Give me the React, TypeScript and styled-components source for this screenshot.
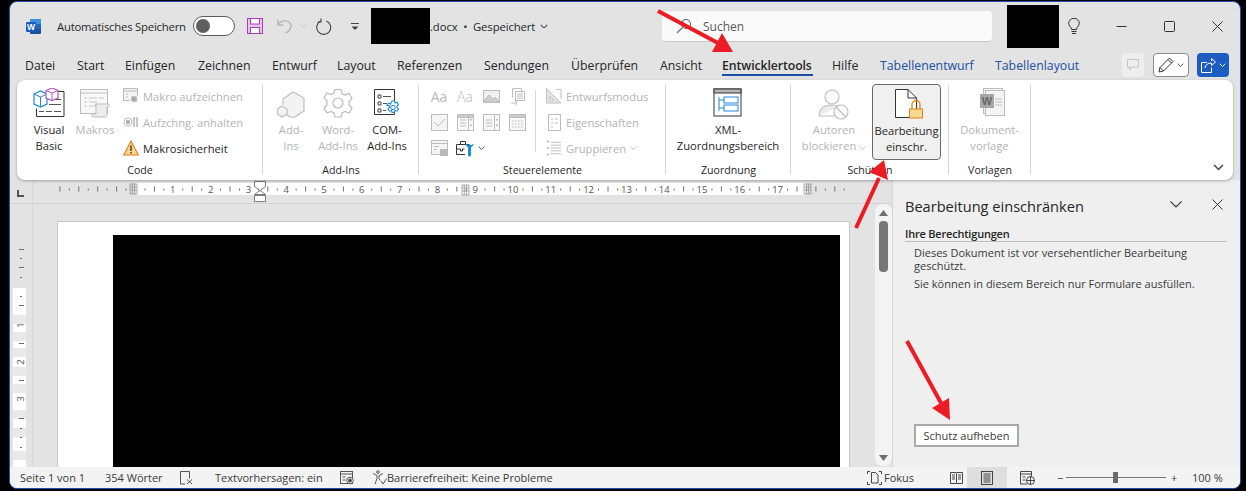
import React from 'react';
import styled, { createGlobalStyle } from 'styled-components';

const GlobalStyle = createGlobalStyle`
  html, body { margin: 0; padding: 0; background: #000; }
  * { box-sizing: border-box; }
`;

const FONT = `"Open Sans", "Noto Sans", sans-serif`;
const RED = '#ec1c24';

const Page = styled.div`
  position: relative;
  width: 1246px;
  height: 491px;
  padding: 1px 5px 2px 9px;
  background: #000;
  font-family: ${FONT};
  overflow: hidden;
`;

const Window = styled.div`
  height: 100%;
  display: flex;
  flex-direction: column;
  background: #e3e3e3;
  border: 1px solid #1c55ae;
  border-radius: 8px;
  overflow: hidden;
  color: #262626;
`;

const TitleBar = styled.div`
  height: 48px;
  flex: none;
  display: flex;
  align-items: center;
`;

const TitleSlot = styled.div<{ $w: number; $pad?: number }>`
  width: ${p => p.$w}px;
  flex: none;
  padding-left: ${p => p.$pad ?? 0}px;
  display: flex;
  align-items: center;
  font-size: 11.3px;
  letter-spacing: -0.2px;
  white-space: nowrap;
`;

const Toggle = styled.div`
  width: 42px;
  height: 20px;
  border: 1px solid #5c5c5c;
  border-radius: 10px;
  background: #fff;
  padding: 2px;
  &::before {
    content: '';
    display: block;
    width: 14px;
    height: 14px;
    border-radius: 50%;
    background: #5f5f5f;
  }
`;

const Redacted = styled.div<{ $w: number; $h: number }>`
  width: ${p => p.$w}px;
  height: ${p => p.$h}px;
  flex: none;
  background: #000;
`;

const FileName = styled.div`
  width: 232px;
  flex: none;
  display: flex;
  align-items: center;
  gap: 5px;
  font-size: 11.3px;
  letter-spacing: -0.1px;
  white-space: nowrap;
`;

const SearchBox = styled.div`
  width: 330px;
  height: 31px;
  flex: none;
  display: flex;
  align-items: center;
  gap: 11px;
  padding: 1px 0 0 14px;
  background: #fafafa;
  border-bottom: 1px solid #c9c9c9;
  border-radius: 4px;
  font-size: 12px;
  color: #5a5a5a;
`;

const WindowButton = styled.div<{ $w: number }>`
  width: ${p => p.$w}px;
  flex: none;
  display: flex;
  justify-content: center;
`;

const TabRow = styled.div`
  height: 30px;
  flex: none;
  display: flex;
  align-items: center;
  padding-left: 15px;
`;

const Tab = styled.div<{ $w: number; $active?: boolean; $context?: boolean }>`
  position: relative;
  width: ${p => p.$w}px;
  height: 30px;
  padding-top: 1px;
  flex: none;
  font-size: 12.3px;
  line-height: 30px;
  white-space: nowrap;
  font-weight: ${p => (p.$active ? 600 : 400)};
  letter-spacing: ${p => (p.$active ? '-0.1px' : '0')};
  color: ${p => (p.$context ? '#1a4fa3' : '#262626')};
  ${p =>
    p.$active &&
    `&::after {
      content: '';
      position: absolute;
      left: 0;
      bottom: 4px;
      width: 91px;
      height: 2px;
      background: #1a4fa3;
    }`}
`;

const TabAction = styled.div<{ $w: number; $kind: 'plain' | 'outline' | 'share'; $gap: number }>`
  width: ${p => p.$w}px;
  height: 24px;
  flex: none;
  margin-right: ${p => p.$gap}px;
  display: flex;
  align-items: center;
  justify-content: center;
  gap: 3px;
  border-radius: 4px;
  background: ${p => (p.$kind === 'plain' ? '#eeeeee' : p.$kind === 'share' ? '#1d5cc0' : '#ffffff')};
  border: ${p => (p.$kind === 'outline' ? '1px solid #8c8c8c' : 'none')};
`;

const Ribbon = styled.div`
  position: relative;
  z-index: 1;
  height: 100px;
  flex: none;
  margin: 0 7px 0 7px;
  display: flex;
  background: #fff;
  border-radius: 8px;
  box-shadow: 0 1px 3px rgba(0, 0, 0, 0.3);
`;

const Group = styled.div<{ $w: number }>`
  width: ${p => p.$w}px;
  flex: none;
  position: relative;
  display: flex;
  flex-direction: column;
  &::after {
    content: '';
    position: absolute;
    right: 0;
    top: 5px;
    bottom: 6px;
    width: 1px;
    background: #d6d6d6;
  }
`;

const GroupBody = styled.div<{ $pad: number; $gap: number }>`
  height: 82px;
  flex: none;
  display: flex;
  padding-left: ${p => p.$pad}px;
  gap: ${p => p.$gap}px;
`;

const GroupLabel = styled.div`
  height: 16px;
  text-align: center;
  font-size: 10.6px;
  line-height: 16px;
  color: #262626;
`;

const BigButton = styled.div<{ $w: number; $off?: boolean; $pressed?: boolean }>`
  width: ${p => p.$w}px;
  height: ${p => (p.$pressed ? '76px' : '80px')};
  margin-top: ${p => (p.$pressed ? '4px' : '0')};
  padding-top: ${p => (p.$pressed ? '4px' : '8px')};
  flex: none;
  display: flex;
  flex-direction: column;
  align-items: center;
  font-size: 11.2px;
  line-height: 16px;
  text-align: center;
  white-space: nowrap;
  color: ${p => (p.$off ? '#b4b4b4' : '#262626')};
  background: ${p => (p.$pressed ? '#f0f0f0' : 'transparent')};
  border: ${p => (p.$pressed ? '1px solid #6a6a6a' : 'none')};
  border-radius: 4px;
`;

const BigIcon = styled.div`
  height: 34px;
  flex: none;
  display: flex;
  justify-content: center;
`;

const SmallColumn = styled.div<{ $w: number; $ml: number }>`
  width: ${p => p.$w}px;
  margin-left: ${p => p.$ml}px;
  padding-top: 3px;
  display: flex;
  flex-direction: column;
  flex: none;
`;

const SmallRow = styled.div<{ $off?: boolean }>`
  height: 26px;
  display: flex;
  align-items: center;
  gap: 4px;
  font-size: 11.2px;
  white-space: nowrap;
  color: ${p => (p.$off ? '#b4b4b4' : '#262626')};
`;

const RowIcon = styled.span`
  width: 16px;
  flex: none;
  display: flex;
  justify-content: center;
`;

const ControlGrid = styled.div`
  width: 104px;
  flex: none;
  padding-top: 3px;
  display: grid;
  grid-template-columns: repeat(4, 26px);
  grid-auto-rows: 26px;
  place-items: center;
`;

const AaGlyph = styled.span<{ $light?: boolean }>`
  font-size: 14px;
  color: #b8b8b8;
  font-weight: ${p => (p.$light ? 300 : 400)};
`;

const ToolsCell = styled.span`
  justify-self: start;
  margin-left: 4px;
  display: flex;
  align-items: center;
  gap: 4px;
`;

const VerticalRule = styled.div`
  width: 1px;
  height: 62px;
  margin-top: 10px;
  flex: none;
  background: #d6d6d6;
`;

const RibbonEnd = styled.div`
  flex: 1;
  display: flex;
  justify-content: flex-end;
  align-items: flex-end;
  padding: 0 9px 9px 0;
`;

const Workspace = styled.div`
  flex: 1;
  min-height: 0;
  display: flex;
`;

const EditorColumn = styled.div`
  width: 882px;
  flex: none;
  display: flex;
  flex-direction: column;
`;

const RulerRow = styled.div`
  height: 24px;
  flex: none;
  display: flex;
  border-bottom: 1px solid #d2d2d2;
`;

const RulerCorner = styled.div`
  width: 23px;
  flex: none;
  display: flex;
  align-items: center;
  padding: 3px 0 0 7px;
  border-right: 1px solid #d8d8d8;
`;

const EditorBody = styled.div`
  flex: 1;
  min-height: 0;
  display: flex;
`;

const SideRuler = styled.div`
  width: 23px;
  flex: none;
  border-right: 1px solid #d8d8d8;
  overflow: hidden;
`;

const PageArea = styled.div`
  flex: 1;
  padding: 17px 25px 0 24px;
  overflow: hidden;
`;

const Sheet = styled.div`
  height: 100%;
  background: #fff;
  border: 1px solid #c8c8c8;
  border-bottom: none;
  padding: 13px 9px 0 55px;
`;

const Redaction = styled.div`
  height: 100%;
  background: #000;
`;

const ScrollBar = styled.div`
  width: 17px;
  flex: none;
  margin-bottom: 1px;
  padding: 6px 0 5px;
  background: #f4f4f4;
  border-radius: 8px;
  display: flex;
  flex-direction: column;
  align-items: center;
`;

const ScrollThumb = styled.div`
  width: 9px;
  height: 51px;
  margin-top: 5px;
  background: #777;
  border-radius: 4px;
`;

const ScrollGap = styled.div`
  flex: 1;
`;

const TaskPane = styled.aside`
  flex: 1;
  min-width: 0;
  background: #efefef;
  border-left: 1px solid #d6d6d6;
  padding: 0 13px 0 12px;
  display: flex;
  flex-direction: column;
`;

const PaneHeader = styled.div`
  height: 52px;
  flex: none;
  padding-top: 16px;
  display: flex;
  align-items: flex-start;
  font-size: 14.6px;
  line-height: 20px;
  color: #262626;
`;

const PaneTitle = styled.div`
  width: 256px;
  flex: none;
  white-space: nowrap;
`;

const PaneControl = styled.div<{ $w: number }>`
  width: ${p => p.$w}px;
  height: 20px;
  flex: none;
  display: flex;
  justify-content: center;
  align-items: center;
  margin-top: -2px;
`;

const PaneHeading = styled.div`
  height: 13px;
  margin-top: -3px;
  font-size: 11px;
  font-weight: 600;
  line-height: 10px;
  letter-spacing: -0.2px;
  border-bottom: 1px solid #bdbdbd;
`;

const PaneText = styled.p<{ $gap: number }>`
  margin: ${p => p.$gap}px 0 0 9px;
  font-size: 11px;
  line-height: 13px;
  color: #3a3a3a;
`;

const PaneSpacer = styled.div`
  flex: 1;
`;

const UnprotectButton = styled.button`
  width: 105px;
  height: 23px;
  margin: 0 0 20px 9px;
  flex: none;
  background: #fff;
  border: 2px solid #a9a9a9;
  padding: 0;
  font-family: ${FONT};
  font-size: 11px;
  color: #3a3a3a;
`;

const StatusBar = styled.div`
  height: 21px;
  flex: none;
  display: flex;
  align-items: center;
  background: #f3f3f3;
  font-size: 11px;
  color: #3a3a3a;
`;

const StatusItem = styled.div<{ $w: number; $pad?: number; $active?: boolean; $gap?: number }>`
  width: ${p => p.$w}px;
  height: 100%;
  flex: none;
  padding-left: ${p => p.$pad ?? 0}px;
  display: flex;
  align-items: center;
  gap: ${p => p.$gap ?? 2}px;
  white-space: nowrap;
  background: ${p => (p.$active ? '#dedede' : 'transparent')};
  justify-content: ${p => (p.$active ? 'center' : 'flex-start')};
`;

const ZoomTrack = styled.div`
  position: relative;
  width: 100px;
  height: 1px;
  flex: none;
  background: #777;
`;

const ZoomThumb = styled.div`
  position: absolute;
  left: 47px;
  top: -5px;
  width: 5px;
  height: 11px;
  background: #6a6a6a;
`;

const ArrowLayer = styled.svg`
  position: absolute;
  left: 0;
  top: 0;
  z-index: 5;
  pointer-events: none;
`;

const G = '#bdbdbd';
const B = '#1e8ad6';

const WordLogo = () => (
  <svg width="17" height="17" viewBox="0 0 17 17">
    <rect x="5" y="1" width="11" height="15" rx="1" fill="#1b4f9c" />
    <rect x="5" y="1" width="11" height="5" fill="#3f8fdc" />
    <rect x="5" y="6" width="11" height="5" fill="#2266bd" />
    <rect x="1" y="4" width="10" height="10" rx="1" fill="#1a5cc0" />
    <text x="6" y="12" fontSize="8.5" fontWeight="700" fill="#fff" textAnchor="middle" fontFamily="Liberation Sans">W</text>
  </svg>
);

const SaveIcon = () => (
  <svg width="16" height="16" viewBox="0 0 16 16">
    <rect x="0.5" y="0.5" width="15" height="15" fill="#e7c4ec" stroke="#a93db8" />
    <rect x="3.5" y="0.5" width="9" height="5.5" fill="#fff" stroke="#a93db8" />
    <rect x="3.5" y="9.5" width="9" height="6" fill="#fff" stroke="#a93db8" />
  </svg>
);

const UndoIcon = () => (
  <svg width="16" height="16" viewBox="0 0 16 16" fill="none" stroke="#a8a8a8" strokeWidth="1.1">
    <path d="M1 1.5v5.5h5.5" />
    <path d="M1.3 6.8C3 4 5.5 2.8 8 2.8c3.5 0 6 2.4 6 5.2 0 2.5-1.5 5-5.500 7" />
  </svg>
);

const RedoIcon = () => (
  <svg width="17" height="17" viewBox="0 0 17 17" fill="none" stroke="#444" strokeWidth="1.1">
    <path d="M5.5 3.2a7 7 0 1 0 6-.2" />
    <path d="M6 0.5v3.5H2.5" />
  </svg>
);

const Chevron = ({ c = '#444', w = 8, sw = 1.3 }: { c?: string; w?: number; sw?: number }) => (
  <svg width={w} height={w * 0.6} viewBox="0 0 10 6" fill="none" stroke={c} strokeWidth={sw}>
    <path d="M1 1l4 4 4-4" />
  </svg>
);

const QuickMenu = () => (
  <svg width="8" height="9" viewBox="0 0 8 9" fill="#444">
    <rect y="1" width="8" height="1" />
    <path d="M0.5 4.5h7L4 8z" />
  </svg>
);

const SearchIcon = () => (
  <svg width="16" height="16" viewBox="0 0 16 16" fill="none" stroke="#666" strokeWidth="1.1">
    <circle cx="10" cy="6" r="4.5" />
    <path d="M6.8 9.2L1 15" />
  </svg>
);

const BulbIcon = () => (
  <svg width="12" height="17" viewBox="0 0 12 17" fill="none" stroke="#333" strokeWidth="1">
    <path d="M3.500 11.500C3.500 9 .7 8 .7 5.300a5.300 5 0 0 1 10.600 0C11.300 8 8.500 9 8.500 11.500z" />
    <path d="M3.500 13.500h5M4 15.500h4" />
  </svg>
);

const WinIcon = ({ kind }: { kind: 'min' | 'max' | 'close' }) => (
  <svg width="11" height="11" viewBox="0 0 11 11" fill="none" stroke="#333" strokeWidth="1">
    {kind === 'min' && <path d="M0.500 5.500h10" />}
    {kind === 'max' && <rect x="0.500" y="0.500" width="10" height="10" rx="1" />}
    {kind === 'close' && <path d="M0.500 0.500l10 10M10.500 0.500l-10 10" />}
  </svg>
);

const CommentIcon = () => (
  <svg width="12" height="12" viewBox="0 0 12 12" fill="none" stroke="#c4c4c4">
    <path d="M0.500 0.500h11v7.500h-7l-2 3v-3h-2z" />
  </svg>
);

const PenIcon = () => (
  <svg width="16" height="16" viewBox="0 0 16 16" fill="none" stroke="#333" strokeWidth="1">
    <path d="M1 15l1-4.500L11.500 1l3.500 3.500L5.500 14z" />
    <path d="M2 10.500L5.500 14M10 2.500l3.500 3.500" />
  </svg>
);

const ShareIcon = () => (
  <svg width="15" height="15" viewBox="0 0 15 15" fill="none" stroke="#fff" strokeWidth="1">
    <path d="M6 4.500H.5v10h10v-5" />
    <path d="M4 10c.5-3.500 3-5 6.500-5V7.500L14.500 4 10.500.5V3" />
  </svg>
);

const VisualBasicIcon = () => (
  <svg width="32" height="30" viewBox="0 1 32 30" fill="none">
    <path d="M25 4.500h6v25H3.500v-8" stroke="#333" />
    <path d="M16 17.500h12M16 12.500h12M6 24.500h5M13 24.500h6M21 24.500h7" stroke="#555" />
    <path d="M1 7l6.500-3L14 7v10l-6.500 3L1 17z" fill="#fff" stroke={B} strokeWidth="1.200" />
    <path d="M1 7l6.500 3L14 7M7.500 10v10" stroke={B} />
    <path d="M13 3.500L19 1l6 2.500v7.500L19 13.500 13 11z" fill="#fff" stroke="#b455c4" strokeWidth="1.200" />
    <path d="M13 3.500l6 2.500 6-2.500M19 6v7.500" stroke="#b455c4" />
  </svg>
);

const MacrosIcon = () => (
  <svg width="32" height="30" viewBox="0 0 32 30" fill="none" stroke={G}>
    <rect x="1.500" y="1.500" width="27" height="24" fill="#f8f8f8" />
    <path d="M1.500 5h27" />
    <path d="M5 10h3M10 10h8M20 10h5M5 14h3M10 14h8M5 18h3M10 18h8" stroke="#c8c8c8" />
    <path d="M16 16h13c2 0 2 3 0 3h-1v8c0 2-2 2-3 2h-11c-2 0-2-3 0-3h3V17z" fill="#ececec" />
  </svg>
);

const RecordIcon = () => (
  <svg width="16" height="16" viewBox="0 0 16 16" fill="none" stroke={G}>
    <rect x="0.500" y="0.500" width="14" height="12" fill="#f3f3f3" />
    <path d="M0.500 3h14M3 6h2M3 9h2" />
    <circle cx="11" cy="11" r="4" fill="#bdbdbd" stroke="#fff" />
    <circle cx="11" cy="11" r="1.500" fill="#999" stroke="none" />
  </svg>
);

const StopIcon = () => (
  <svg width="16" height="16" viewBox="0 0 16 16" fill="none" stroke={G}>
    <circle cx="5" cy="8" r="4" />
    <circle cx="5" cy="8" r="2.200" fill="#b0b0b0" stroke="none" />
    <path d="M11 3v10M14 3v10" strokeWidth="1.300" stroke="#aaa" />
  </svg>
);

const WarnIcon = () => (
  <svg width="16" height="16" viewBox="0 0 16 16">
    <path d="M8 1l7.300 14H.7z" fill="#fbd88f" stroke="#e27a13" strokeWidth="1.100" />
    <rect x="7.300" y="5.500" width="1.400" height="5.500" fill="#333" />
    <rect x="7.300" y="12" width="1.400" height="1.500" fill="#333" />
  </svg>
);

const AddInIcon = () => (
  <svg width="30" height="30" viewBox="0 0 30 30" fill="#f3f3f3" stroke={G} strokeWidth="1.200">
    <path d="M7 11l10-7 11 6v13l-11 7-6-3" />
    <path d="M7 11v6" />
    <path d="M1.500 21l4.500-3 5 3v5l-5 3-4.500-3z" />
  </svg>
);

const GearIcon = () => (
  <svg width="30" height="30" viewBox="0 0 30 30" fill="none" stroke={G} strokeWidth="1.200">
    <path d="M12 1.500h6l1 4 3 1.500 4-1.500 3 5-3 3v3.500l3 3-3 5-4-1.500-3 1.500-1 4h-6l-1-4-3-1.500-4 1.500-3-5 3-3V13l-3-3 3-5 4 1.500 3-1.500z" />
    <circle cx="15" cy="15" r="5" />
  </svg>
);

const ComIcon = () => (
  <svg width="30" height="30" viewBox="0 0 30 30" fill="none">
    <path d="M2.500 1.500h20v25h-20z" stroke="#333" fill="#fff" />
    <path d="M6 7h3v3H6zM6 14h3v3H6zM6 21h3v3H6z" stroke="#444" />
    <path d="M11 8.500h8M11 15.500h4M11 22.500h3" stroke="#555" />
    <path d="M20 13l2.500 0 .5 2 2-.8 1.500 2.200-1.500 1.600v1.500l1.500 1.500-1.500 2.200-2-.8-.5 2h-2.500l-.5-2-2 .8-1.500-2.200 1.500-1.500v-1.500L15 17.400l1.500-2.200 2 .8z" fill="#fff" stroke={B} strokeWidth="1.100" />
    <circle cx="21" cy="19.500" r="2.200" fill="#fff" stroke={B} />
  </svg>
);

type ControlKind = 'aa' | 'aa2' | 'pic' | 'block' | 'check' | 'combo' | 'list' | 'date' | 'legacy';

const ControlIcon = ({ kind }: { kind: ControlKind }) => {
  if (kind === 'aa' || kind === 'aa2') {
    return <AaGlyph $light={kind === 'aa2'}>Aa</AaGlyph>;
  }
  return (
    <svg width="17" height="17" viewBox="0 0 17 17" fill="none" stroke={G}>
      {kind === 'pic' && (
        <>
          <rect x="0.500" y="2.500" width="16" height="12" fill="#f0f0f0" />
          <path d="M1 13l5-6 4 4 2-1.500 4 3.500v1H1z" fill="#cfcfcf" />
        </>
      )}
      {kind === 'block' && (
        <>
          <path d="M3.500 .5h9v3M3.500 .5v9" />
          <rect x="6.500" y="3.500" width="9" height="9" />
          <path d="M8 6h6M8 8h6M8 10h6M2 15h6M6 13l2 2-2 2" />
        </>
      )}
      {kind === 'check' && (
        <>
          <rect x="0.500" y="0.500" width="16" height="16" fill="#f5f5f5" />
          <path d="M3 8l4 4 7-7" />
        </>
      )}
      {(kind === 'combo' || kind === 'list') && (
        <>
          <rect x="0.500" y="0.500" width="16" height="16" fill="#f8f8f8" />
          {kind === 'combo' && <rect x="0.500" y="0.500" width="16" height="3" fill="#ccc" />}
          <path d="M11.500 .5v16M3 6h6M3 9h6M3 12h6" />
          <path d="M14 5l-1 1h2zM14 12l-1-1h2z" />
        </>
      )}
      {kind === 'date' && (
        <>
          <rect x="0.500" y="0.500" width="16" height="16" fill="#f8f8f8" />
          <rect x="0.500" y="0.500" width="16" height="3" fill="#ccc" />
          <path d="M3 7h11M3 10h11M3 13h11" strokeDasharray="1.500 1.500" />
        </>
      )}
      {kind === 'legacy' && (
        <>
          <rect x="0.500" y="0.500" width="16" height="14" fill="#f5f5f5" />
          <path d="M.5 3.500h16M3 6.500h5M3 9.500h3" />
          <rect x="9" y="9" width="8" height="7" fill="#b8b8b8" stroke="none" />
        </>
      )}
    </svg>
  );
};

const ToolsIcon = () => (
  <svg width="18" height="17" viewBox="0 0 18 17" fill="none">
    <path d="M4.500 4V1.500h5V4" stroke="#333" />
    <path d="M9 14.500H.5v-10h13" stroke="#333" fill="#fff" />
    <path d="M.5 9h4v2h2V9h2" stroke="#333" />
    <path d="M9.500 3.500c0 2.500 2 3.500 2.500 4V15a1.500 1.500 0 0 0 3 0V7.500c.5-.5 2.500-1.500 2.500-4L15.500 5h-2.500z" fill={B} />
  </svg>
);

const DesignIcon = () => (
  <svg width="16" height="16" viewBox="0 0 17 17" fill="#e4e4e4" stroke={G}>
    <path d="M.5.500l15.500 15.500H.5z" />
    <path d="M4 9l4 4H4z" fill="#fff" />
    <path d="M11 1.500h5v10" fill="none" />
  </svg>
);

const PropsIcon = () => (
  <svg width="13" height="17" viewBox="0 0 13 17" fill="none" stroke={G}>
    <rect x="0.500" y="0.500" width="12" height="16" />
    <path d="M3 5h2M3 9h2M3 13h2M7 5h3M7 9h3" />
  </svg>
);

const GroupIcon = () => (
  <svg width="16" height="17" viewBox="0 0 17 17" fill="none" stroke={G}>
    <path d="M5 2h11M5 5h11M5 8h11M5 11h11M5 14h11" />
    <path d="M1 1h2M1 8h2M1 15h2" strokeWidth="2" />
  </svg>
);

const XmlIcon = () => (
  <svg width="30" height="30" viewBox="0 0 30 30" fill="none">
    <rect x="1" y="1" width="27" height="27" fill="#fff" stroke="#333" />
    <rect x="1" y="1" width="27" height="4" fill="#b5b5b5" stroke="#333" />
    <path d="M6 9v14M6 12h5M6 20h5" stroke={B} />
    <rect x="11" y="9" width="14" height="6" stroke={B} />
    <rect x="11" y="17" width="14" height="6" stroke={B} />
  </svg>
);

const AuthorsIcon = () => (
  <svg width="32" height="32" viewBox="0 0 32 32" fill="none" stroke={G} strokeWidth="1.200">
    <circle cx="14" cy="9" r="7" />
    <path d="M1 28c0-7 5-11 13-11 3 0 5 .5 7 1.500" fill="#ececec" />
    <path d="M1 28h16" />
    <circle cx="23" cy="24" r="7" fill="#fff" />
    <path d="M18 19l10 10" />
  </svg>
);

const RestrictIcon = () => (
  <svg width="32" height="30" viewBox="0 0 32 30" fill="none">
    <path d="M4.500 .5h12.500l8.500 8.500v19.500h-21z" fill="#fff" stroke="#333" />
    <path d="M17 .5v8.500h8.500" stroke="#333" />
    <path d="M21 20v-4.500a4 4 0 0 1 8 0V20" stroke="#e28115" strokeWidth="1.300" />
    <rect x="18.500" y="20" width="13" height="9" fill="#fbd88f" stroke="#e28115" />
  </svg>
);

const TemplateIcon = () => (
  <svg width="30" height="30" viewBox="0 0 30 30" fill="none">
    <rect x="8.500" y="0.500" width="19" height="25" fill="#f4f4f4" stroke={G} />
    <rect x="10.500" y="2.500" width="19" height="25" fill="#f4f4f4" stroke={G} />
    <path d="M20 11h7M20 14h7M20 17h7" stroke={G} />
    <rect x="5" y="6" width="14" height="14" fill="#a8a8a8" />
    <text x="12" y="17" fontSize="11" fontWeight="700" fill="#666" textAnchor="middle" fontFamily="Liberation Sans">W</text>
  </svg>
);

const GridMark = ({ x, y }: { x: number; y: number }) => (
  <path
    d={`M${x} ${y}h7v10h-7zM${x} ${y + 3}h7M${x} ${y + 6}h7M${x + 2.300} ${y}v10M${x + 4.600} ${y}v10`}
    fill="none"
    stroke="#8a8a8a"
    strokeWidth="0.700"
  />
);

const HorizontalRuler = () => {
  const ticks = Array.from({ length: 87 }, (_, i) => i - 10);
  return (
    <svg width="858" height="23" viewBox="0 0 858 23">
      <g transform="translate(-33 -181)">
        <rect x="136" y="184" width="670" height="12" fill="#fff" />
        {ticks.map(i => {
          const x = 135 + (37.8 * i) / 4;
          const isNumber = i % 4 === 0 && i > 0 && i < 72;
          if (x < 58 || x > 846 || isNumber || i === 0 || i === 68) return null;
          const big = i % 2 === 0;
          return <rect key={i} x={x} y={big ? 187.500 : 189.500} width="1" height={big ? 5 : 2} fill="#707070" />;
        })}
        {Array.from({ length: 17 }, (_, i) => i + 1).map(n => (
          <text key={n} x={135 + 37.8 * n} y="194" fontSize="9.500" fill="#555" textAnchor="middle" fontFamily="Open Sans">{n}</text>
        ))}
        <GridMark x={130} y={185} />
        <GridMark x={804} y={185} />
        <GridMark x={462} y={186} />
        <path d="M254.500 182.500h11v5l-5.500 4-5.500-4z" fill="#fff" stroke="#7d7d7d" />
        <path d="M254.500 195.500l5.500-4 5.500 4zM254.500 196.500h11v6h-11z" fill="#fff" stroke="#7d7d7d" />
      </g>
    </svg>
  );
};

const BANDS = [315, 332, 348, 367, 384, 410, 428, 451];

const LeftRuler = () => (
  <svg width="22" height="263" viewBox="0 0 22 263">
    <g transform="translate(-10 -204)">
      <rect x="13" y="288" width="13" height="180" fill="#fff" />
      {BANDS.map(y => (
        <rect key={y} x="13" y={y} width="13" height="9" fill="#e9e9e9" />
      ))}
      {[249, 267, 305, 343, 380, 418].map(y => (
        <rect key={y} x="19" y={y} width="5" height="1" fill="#6c6c6c" />
      ))}
      {[258, 277, 296, 428, 437, 447].map(y => (
        <rect key={y} x="20" y={y} width="2" height="1" fill="#6c6c6c" />
      ))}
      {[325, 362, 399].map((y, i) => (
        <text key={y} x="0" y="0" fontSize="9.500" fill="#555" fontFamily="Open Sans" textAnchor="middle" transform={`translate(24 ${y}) rotate(-90)`}>{i + 1}</text>
      ))}
    </g>
  </svg>
);

const RulerTab = () => (
  <svg width="7" height="7" viewBox="0 0 7 7">
    <path d="M0 0h2v5h5v2H0z" fill="#555" />
  </svg>
);

const ScrollArrow = ({ up }: { up?: boolean }) => (
  <svg width="9" height="6" viewBox="0 0 9 6">
    <path d={up ? 'M4.500 0L9 6H0z' : 'M0 0h9L4.500 6z'} fill="#6f6f6f" />
  </svg>
);

const BookmarkIcon = () => (
  <svg width="15" height="14" viewBox="0 0 15 14" fill="none" stroke="#444" strokeWidth="0.900">
    <path d="M5 13H.5V.5h9v7" />
    <path d="M7 8.500l5 4.500M12 8.500l-5 4.500" />
  </svg>
);

const MacroStatusIcon = () => (
  <svg width="15" height="14" viewBox="0 0 15 14" fill="none" stroke="#444" strokeWidth="0.900">
    <rect x="0.500" y="0.500" width="12" height="12" />
    <path d="M.5 3h12M2.500 6h3M2.500 9h3" />
    <circle cx="10" cy="9.500" r="3.300" fill="#f3f3f3" />
    <circle cx="10" cy="9.500" r="1.500" fill="#444" />
  </svg>
);

const AccessIcon = () => (
  <svg width="15" height="15" viewBox="0 0 15 15" fill="none" stroke="#444" strokeWidth="0.900">
    <circle cx="6" cy="2" r="1.300" />
    <path d="M1 3.500l4 2v3l-2 5.500M11 3.500l-4 2v3l1 2M9 11l2 3 3.500-5.500" />
  </svg>
);

const FocusIcon = () => (
  <svg width="15" height="14" viewBox="0 0 15 14" fill="none" stroke="#333" strokeWidth="0.900">
    <path d="M.5 3V.5H3M12 .5h2.500V3M.5 11v2.500H3M12 13.500h2.500V11" />
    <path d="M4.500 12V1.500h4l2.500 2.500v8z" />
  </svg>
);

const ReadIcon = () => (
  <svg width="13" height="12" viewBox="0 0 13 12" fill="none" stroke="#333" strokeWidth="0.900">
    <path d="M.5.500h5.500l.5.500.5-.5h5.500v11H7l-.5.500-.5-.5H.5zM6.500 1v10.500M2 3h3M2 5h3M2 7h3M8 3h3M8 5h3M8 7h3" />
  </svg>
);

const PrintIcon = () => (
  <svg width="12" height="14" viewBox="0 0 12 14" fill="none" stroke="#333" strokeWidth="0.900">
    <rect x="0.500" y="0.500" width="11" height="13" />
    <path d="M2.500 3h7M2.500 5h7M2.500 7h7M2.500 9h7M2.500 11h7" />
  </svg>
);

const WebIcon = () => (
  <svg width="15" height="14" viewBox="0 0 15 14" fill="none" stroke="#333" strokeWidth="0.900">
    <path d="M7 13H.5V.5h11V6" />
    <path d="M.5 3h11M2.500 6h3M2.500 9h3" />
    <circle cx="10.500" cy="9.500" r="4" fill="#f3f3f3" />
    <path d="M6.500 9.500h8M10.500 5.500v8" />
  </svg>
);

const Arrows = () => (
  <ArrowLayer width="1246" height="491" viewBox="0 0 1246 491">
    <g stroke={RED} strokeWidth="4" fill="none">
      <path d="M658 11L718 43" />
      <path d="M856 228L879 178" />
      <path d="M907 341L941 403" />
    </g>
    <g fill={RED}>
      <path d="M733 52L712 52 722 33z" />
      <path d="M884 160L869 172 888 180z" />
      <path d="M950 420L932 408 949 398z" />
    </g>
  </ArrowLayer>
);

const TABS: { label: string; w: number; active?: boolean; context?: boolean }[] = [
  { label: 'Datei', w: 52 },
  { label: 'Start', w: 48 },
  { label: 'Einfügen', w: 73 },
  { label: 'Zeichnen', w: 74 },
  { label: 'Entwurf', w: 65 },
  { label: 'Layout', w: 60 },
  { label: 'Referenzen', w: 87 },
  { label: 'Sendungen', w: 87 },
  { label: 'Überprüfen', w: 89 },
  { label: 'Ansicht', w: 62 },
  { label: 'Entwicklertools', w: 110, active: true },
  { label: 'Hilfe', w: 48 },
  { label: 'Tabellenentwurf', w: 115, context: true },
  { label: 'Tabellenlayout', w: 127, context: true },
];

const CONTROLS: ControlKind[] = ['aa', 'aa2', 'pic', 'block', 'check', 'combo', 'list', 'date', 'legacy'];

export default function App() {
  return (
    <>
      <GlobalStyle />
      <Page>
        <Window>
          <TitleBar>
            <TitleSlot $w={47} $pad={15}><WordLogo /></TitleSlot>
            <TitleSlot $w={136}>Automatisches Speichern</TitleSlot>
            <TitleSlot $w={54}><Toggle /></TitleSlot>
            <TitleSlot $w={30}><SaveIcon /></TitleSlot>
            <TitleSlot $w={23}><UndoIcon /></TitleSlot>
            <TitleSlot $w={15}><Chevron c="#c4c4c4" w={7} /></TitleSlot>
            <TitleSlot $w={36}><RedoIcon /></TitleSlot>
            <TitleSlot $w={20}><QuickMenu /></TitleSlot>
            <Redacted $w={59} $h={36} />
            <FileName>
              <span>.docx&nbsp;&nbsp;•&nbsp;&nbsp;Gespeichert</span>
              <Chevron />
            </FileName>
            <SearchBox>
              <SearchIcon />
              <span>Suchen</span>
            </SearchBox>
            <WindowButton $w={15} />
            <Redacted $w={52} $h={43} />
            <WindowButton $w={30}><BulbIcon /></WindowButton>
            <WindowButton $w={9} />
            <WindowButton $w={47}><WinIcon kind="min" /></WindowButton>
            <WindowButton $w={48}><WinIcon kind="max" /></WindowButton>
            <WindowButton $w={48}><WinIcon kind="close" /></WindowButton>
          </TitleBar>

          <TabRow>
            {TABS.map(t => (
              <Tab key={t.label} $w={t.w} $active={t.active} $context={t.context}>{t.label}</Tab>
            ))}
            <TabAction $w={22} $kind="plain" $gap={9}><CommentIcon /></TabAction>
            <TabAction $w={36} $kind="outline" $gap={8}><PenIcon /><Chevron w={7} /></TabAction>
            <TabAction $w={32} $kind="share" $gap={0}><ShareIcon /><Chevron c="#fff" w={7} /></TabAction>
          </TabRow>

          <Ribbon>
            <Group $w={246}>
              <GroupBody $pad={8} $gap={2}>
                <BigButton $w={48}>
                  <BigIcon><VisualBasicIcon /></BigIcon>
                  Visual<br />Basic
                </BigButton>
                <BigButton $w={40} $off>
                  <BigIcon><MacrosIcon /></BigIcon>
                  Makros
                </BigButton>
                <SmallColumn $w={130} $ml={6}>
                  <SmallRow $off><RecordIcon />Makro aufzeichnen</SmallRow>
                  <SmallRow $off><StopIcon />Aufzchng. anhalten</SmallRow>
                  <SmallRow><WarnIcon />Makrosicherheit</SmallRow>
                </SmallColumn>
              </GroupBody>
              <GroupLabel>Code</GroupLabel>
            </Group>

            <Group $w={156}>
              <GroupBody $pad={7} $gap={4}>
                <BigButton $w={42} $off>
                  <BigIcon><AddInIcon /></BigIcon>
                  Add-<br />Ins
                </BigButton>
                <BigButton $w={44} $off>
                  <BigIcon><GearIcon /></BigIcon>
                  Word-<br />Add-Ins
                </BigButton>
                <BigButton $w={46}>
                  <BigIcon><ComIcon /></BigIcon>
                  COM-<br />Add-Ins
                </BigButton>
              </GroupBody>
              <GroupLabel>Add-Ins</GroupLabel>
            </Group>

            <Group $w={247}>
              <GroupBody $pad={7} $gap={5}>
                <ControlGrid>
                  {CONTROLS.map(k => (
                    <ControlIcon key={k} kind={k} />
                  ))}
                  <ToolsCell>
                    <ToolsIcon /><Chevron w={7} />
                  </ToolsCell>
                </ControlGrid>
                <VerticalRule />
                <SmallColumn $w={118} $ml={5}>
                  <SmallRow $off><RowIcon><DesignIcon /></RowIcon>Entwurfsmodus</SmallRow>
                  <SmallRow $off><RowIcon><PropsIcon /></RowIcon>Eigenschaften</SmallRow>
                  <SmallRow $off><RowIcon><GroupIcon /></RowIcon>Gruppieren <Chevron c={G} w={7} /></SmallRow>
                </SmallColumn>
              </GroupBody>
              <GroupLabel>Steuerelemente</GroupLabel>
            </Group>

            <Group $w={125}>
              <GroupBody $pad={0} $gap={0}>
                <BigButton $w={124}>
                  <BigIcon><XmlIcon /></BigIcon>
                  XML-<br />Zuordnungsbereich
                </BigButton>
              </GroupBody>
              <GroupLabel>Zuordnung</GroupLabel>
            </Group>

            <Group $w={158}>
              <GroupBody $pad={8} $gap={3}>
                <BigButton $w={70} $off>
                  <BigIcon><AuthorsIcon /></BigIcon>
                  Autoren<br />
                  <span>blockieren <Chevron c={G} w={7} /></span>
                </BigButton>
                <BigButton $w={69} $pressed>
                  <BigIcon><RestrictIcon /></BigIcon>
                  Bearbeitung<br />einschr.
                </BigButton>
              </GroupBody>
              <GroupLabel>Schützen</GroupLabel>
            </Group>

            <Group $w={82}>
              <GroupBody $pad={0} $gap={0}>
                <BigButton $w={81} $off>
                  <BigIcon><TemplateIcon /></BigIcon>
                  Dokument-<br />vorlage
                </BigButton>
              </GroupBody>
              <GroupLabel>Vorlagen</GroupLabel>
            </Group>

            <RibbonEnd><Chevron w={11} /></RibbonEnd>
          </Ribbon>

          <Workspace>
            <EditorColumn>
              <RulerRow>
                <RulerCorner><RulerTab /></RulerCorner>
                <HorizontalRuler />
              </RulerRow>
              <EditorBody>
                <SideRuler><LeftRuler /></SideRuler>
                <PageArea>
                  <Sheet><Redaction /></Sheet>
                </PageArea>
                <ScrollBar>
                  <ScrollArrow up />
                  <ScrollThumb />
                  <ScrollGap />
                  <ScrollArrow />
                </ScrollBar>
              </EditorBody>
            </EditorColumn>

            <TaskPane>
              <PaneHeader>
                <PaneTitle>Bearbeitung einschränken</PaneTitle>
                <PaneControl $w={30}><Chevron c="#333" w={14} sw={0.8} /></PaneControl>
                <PaneControl $w={52}><WinIcon kind="close" /></PaneControl>
              </PaneHeader>
              <PaneHeading>Ihre Berechtigungen</PaneHeading>
              <PaneText $gap={4}>Dieses Dokument ist vor versehentlicher Bearbeitung geschützt.</PaneText>
              <PaneText $gap={5}>Sie können in diesem Bereich nur Formulare ausfüllen.</PaneText>
              <PaneSpacer />
              <UnprotectButton>Schutz aufheben</UnprotectButton>
            </TaskPane>
          </Workspace>

          <StatusBar>
            <StatusItem $w={95} $pad={10}>Seite 1 von 1</StatusItem>
            <StatusItem $w={75}>354 Wörter</StatusItem>
            <StatusItem $w={35}><BookmarkIcon /></StatusItem>
            <StatusItem $w={125}>Textvorhersagen: ein</StatusItem>
            <StatusItem $w={32}><MacroStatusIcon /></StatusItem>
            <StatusItem $w={495} $gap={0}><AccessIcon />Barrierefreiheit: Keine Probleme</StatusItem>
            <StatusItem $w={83}><FocusIcon />Fokus</StatusItem>
            <StatusItem $w={17}><ReadIcon /></StatusItem>
            <StatusItem $w={40} $active><PrintIcon /></StatusItem>
            <StatusItem $w={13} />
            <StatusItem $w={37}><WebIcon /></StatusItem>
            <StatusItem $w={9}>−</StatusItem>
            <ZoomTrack><ZoomThumb /></ZoomTrack>
            <StatusItem $w={26} $pad={5}>+</StatusItem>
            <StatusItem $w={40}>100 %</StatusItem>
          </StatusBar>
        </Window>
        <Arrows />
      </Page>
    </>
  );
}
